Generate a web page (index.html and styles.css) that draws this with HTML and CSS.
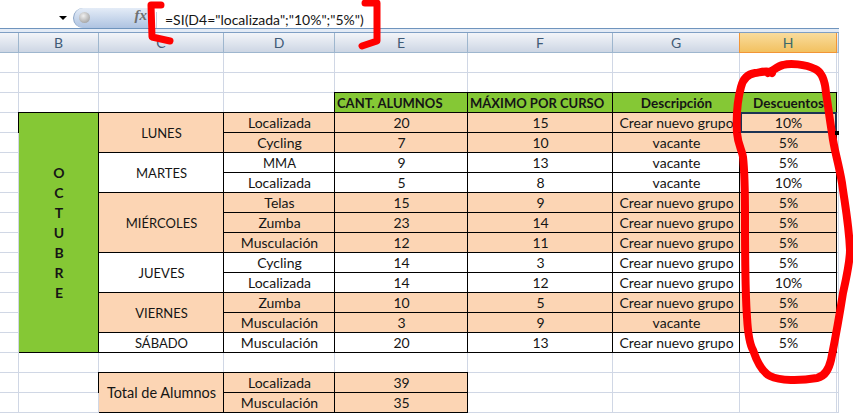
FILE: index.html
```html
<!DOCTYPE html>
<html lang="es">
<head>
<meta charset="utf-8">
<title>Descuentos</title>
<link rel="stylesheet" href="styles.css">
</head>
<body>
<div class="page">
  <div class="formula-bar">
    <span class="name-arrow"></span>
    <div class="fx-pill"><span class="fx-ball"></span><span class="fx-label">fx</span></div>
    <div class="formula">=SI(D4="localizada";"10%";"5%")</div>
  </div>
  <div class="sheet">
    <div class="h corner"></div><div class="h">B</div><div class="h">C</div><div class="h">D</div><div class="h">E</div><div class="h">F</div><div class="h">G</div><div class="h active">H</div><div class="h"></div>

    <div class="e"></div><div class="e"></div><div class="e"></div><div class="e"></div><div class="e"></div><div class="e"></div><div class="e"></div><div class="e"></div><div class="e"></div>
    <div class="e"></div><div class="e"></div><div class="e"></div><div class="e"></div><div class="e"></div><div class="e"></div><div class="e"></div><div class="e"></div><div class="e"></div>

    <div class="e"></div><div class="e"></div><div class="e"></div><div class="e"></div>
    <div class="c head left">CANT. ALUMNOS</div><div class="c head left">MÁXIMO POR CURSO</div><div class="c head wide">Descripción</div><div class="c head wide">Descuentos</div>
    <div class="e"></div>

    <div class="e"></div>
    <div class="c month">O<br>C<br>T<br>U<br>B<br>R<br>E</div>
    <div class="c p span2 day">LUNES</div>
    <div class="c p">Localizada</div><div class="c p">20</div><div class="c p">15</div><div class="c p">Crear nuevo grupo</div><div class="c p selected">10%</div><div class="e"></div>

    <div class="e"></div>
    <div class="c p">Cycling</div><div class="c p">7</div><div class="c p">10</div><div class="c p">vacante</div><div class="c p">5%</div><div class="e"></div>

    <div class="e"></div>
    <div class="c span2 day">MARTES</div>
    <div class="c day">MMA</div><div class="c">9</div><div class="c">13</div><div class="c">vacante</div><div class="c">5%</div><div class="e"></div>

    <div class="e"></div>
    <div class="c">Localizada</div><div class="c">5</div><div class="c">8</div><div class="c">vacante</div><div class="c">10%</div><div class="e"></div>

    <div class="e"></div>
    <div class="c p span3 day">MIÉRCOLES</div>
    <div class="c p">Telas</div><div class="c p">15</div><div class="c p">9</div><div class="c p">Crear nuevo grupo</div><div class="c p">5%</div><div class="e"></div>

    <div class="e"></div>
    <div class="c p">Zumba</div><div class="c p">23</div><div class="c p">14</div><div class="c p">Crear nuevo grupo</div><div class="c p">5%</div><div class="e"></div>

    <div class="e"></div>
    <div class="c p">Musculación</div><div class="c p">12</div><div class="c p">11</div><div class="c p">Crear nuevo grupo</div><div class="c p">5%</div><div class="e"></div>

    <div class="e"></div>
    <div class="c span2 day">JUEVES</div>
    <div class="c">Cycling</div><div class="c">14</div><div class="c">3</div><div class="c">Crear nuevo grupo</div><div class="c">5%</div><div class="e"></div>

    <div class="e"></div>
    <div class="c">Localizada</div><div class="c">14</div><div class="c">12</div><div class="c">Crear nuevo grupo</div><div class="c">10%</div><div class="e"></div>

    <div class="e"></div>
    <div class="c p span2 day">VIERNES</div>
    <div class="c p">Zumba</div><div class="c p">10</div><div class="c p">5</div><div class="c p">Crear nuevo grupo</div><div class="c p">5%</div><div class="e"></div>

    <div class="e"></div>
    <div class="c p">Musculación</div><div class="c p">3</div><div class="c p">9</div><div class="c p">vacante</div><div class="c p">5%</div><div class="e"></div>

    <div class="e"></div>
    <div class="c day">SÁBADO</div>
    <div class="c">Musculación</div><div class="c">20</div><div class="c">13</div><div class="c">Crear nuevo grupo</div><div class="c">5%</div><div class="e"></div>

    <div class="e"></div><div class="e"></div><div class="e"></div><div class="e"></div><div class="e"></div><div class="e"></div><div class="e"></div><div class="e"></div><div class="e"></div>

    <div class="e"></div><div class="e"></div>
    <div class="c p span2 total">Total de Alumnos</div>
    <div class="c p">Localizada</div><div class="c p">39</div><div class="e"></div><div class="e"></div><div class="e"></div><div class="e"></div>

    <div class="e"></div><div class="e"></div>
    <div class="c p">Musculación</div><div class="c p">35</div><div class="e"></div><div class="e"></div><div class="e"></div><div class="e"></div>
  </div>

  <svg class="ink" width="853" height="414" viewBox="0 0 853 414" aria-hidden="true">
    <path d="M161 5 L151 5 L152 37 L170 41" />
    <path d="M365 3 L377 3 L377 41 L362 46" />
    <path class="loop" d="M772 73 C768 70 762 72 755 73 C748 74 743 79 741 87 C738 98 736 115 737 133 C738 145 742 150 743 157 C745 175 745 200 745 217 C745 250 745 290 747 317 C748 335 750 345 753 350 C757 362 762 372 770 376 C780 381 800 381 817 378 C826 376 829 368 831 360 C834 345 838 325 843 293 C847 275 850 262 850 250 C849 225 845 205 842 183 C838 160 834 150 832 133 C829 115 828 105 826 93 C825 80 822 72 815 69 C805 64 790 63 783 65 C778 66 774 70 768 73" />
  </svg>
</div>
</body>
</html>
```
FILE: styles.css
```css
* { box-sizing: border-box; }
html, body { margin: 0; background: #fff; }
.page {
  position: relative;
  width: 853px;
  height: 414px;
  overflow: hidden;
  font-family: Lato, "Open Sans", sans-serif;
  font-size: 14px;
  color: #151515;
}

/* formula bar */
.formula-bar {
  display: flex;
  align-items: center;
  width: 839px;
  height: 33px;
  padding: 8px 0 4px 59px;
  border-bottom: 1px solid #7f9fc4;
  box-shadow: inset 0 -4px 0 #e3ebf6;
  position: relative;
}
.formula-bar::after {
  content: "";
  position: absolute;
  left: 0;
  right: 0;
  bottom: 3px;
  height: 1px;
  background: #6f94bd;
}
.name-arrow {
  width: 0;
  height: 0;
  border-left: 4px solid transparent;
  border-right: 4px solid transparent;
  border-top: 4px solid #000;
  margin-right: 6px;
}
.fx-pill {
  position: relative;
  flex: none;
  width: 75px;
  height: 20px;
  border-radius: 11px 0 0 11px;
  background: linear-gradient(#e4ecf7, #aec3e1);
  border-left: 1px solid #8aa4c6;
}
.fx-ball {
  position: absolute;
  left: 5px;
  top: 4px;
  width: 11px;
  height: 11px;
  border-radius: 50%;
  background: radial-gradient(circle at 40% 35%, #f0f0f0, #8f8f8f);
}
.fx-label {
  position: absolute;
  right: 1px;
  top: -1px;
  font-family: "Liberation Serif", serif;
  font-style: italic;
  font-weight: bold;
  font-size: 15px;
  color: #6f6f6f;
}
.formula {
  margin-left: 8px;
  height: 16px;
  margin-top: 4px;
  padding-left: 8px;
  border-left: 1px solid #c3cfdf;
  line-height: 16px;
  font-size: 14px;
  white-space: nowrap;
}

/* sheet */
.sheet {
  display: grid;
  grid-template-columns: 19px 80px 125px 111px 133px 145px 127px 97px 2px;
  grid-auto-rows: 20px;
  width: 839px;
}
.h {
  display: flex;
  align-items: center;
  justify-content: center;
  background: linear-gradient(#f3f5f9, #cdd6e4);
  border-right: 1px solid #9eb6ce;
  border-bottom: 1px solid #9eb6ce;
  color: #3f5a76;
  font-size: 14px;
}
.h.active {
  background: linear-gradient(#f9dc9d, #f2c160);
  border-color: #f29536;
  box-shadow: -1px 0 0 #f29536;
  color: #3d6a6a;
}
.e {
  border-right: 1px solid #d0d7e5;
  border-bottom: 1px solid #d0d7e5;
}
.c {
  display: flex;
  align-items: center;
  justify-content: center;
  padding-bottom: 1px;
  white-space: nowrap;
  background: #fff;
  box-shadow: inset -1px -1px 0 #000, -1px 0 0 #000, 0 -1px 0 #000, -1px -1px 0 #000;
}
.p { background: #fcd5b4; }
.day { font-size: 13px; }
.total { font-size: 14.5px; }
.head { background: #85c835; font-weight: 700; font-size: 13px; }
.head.wide { font-size: 13.5px; }
.head.left { justify-content: flex-start; padding-left: 2px; }
.month {
  grid-row: span 12;
  background: #85c835;
  font-weight: 700;
  line-height: 20px;
  text-align: center;
}
.span2 { grid-row: span 2; }
.span3 { grid-row: span 3; }
.selected { position: relative; }
.selected::after {
  content: "";
  position: absolute;
  inset: -1px 0 0 0;
  border: 2px solid #1c3353;
  pointer-events: none;
}
.selected::before {
  content: "";
  position: absolute;
  right: -2px;
  bottom: -2px;
  width: 4px;
  height: 4px;
  background: #000;
  z-index: 1;
}

/* hand-drawn red marks */
.ink {
  position: absolute;
  left: 0;
  top: 0;
  fill: none;
  stroke: #f00;
  stroke-width: 7;
  stroke-linecap: round;
  stroke-linejoin: round;
}
.ink .loop { stroke-width: 8; }
```
